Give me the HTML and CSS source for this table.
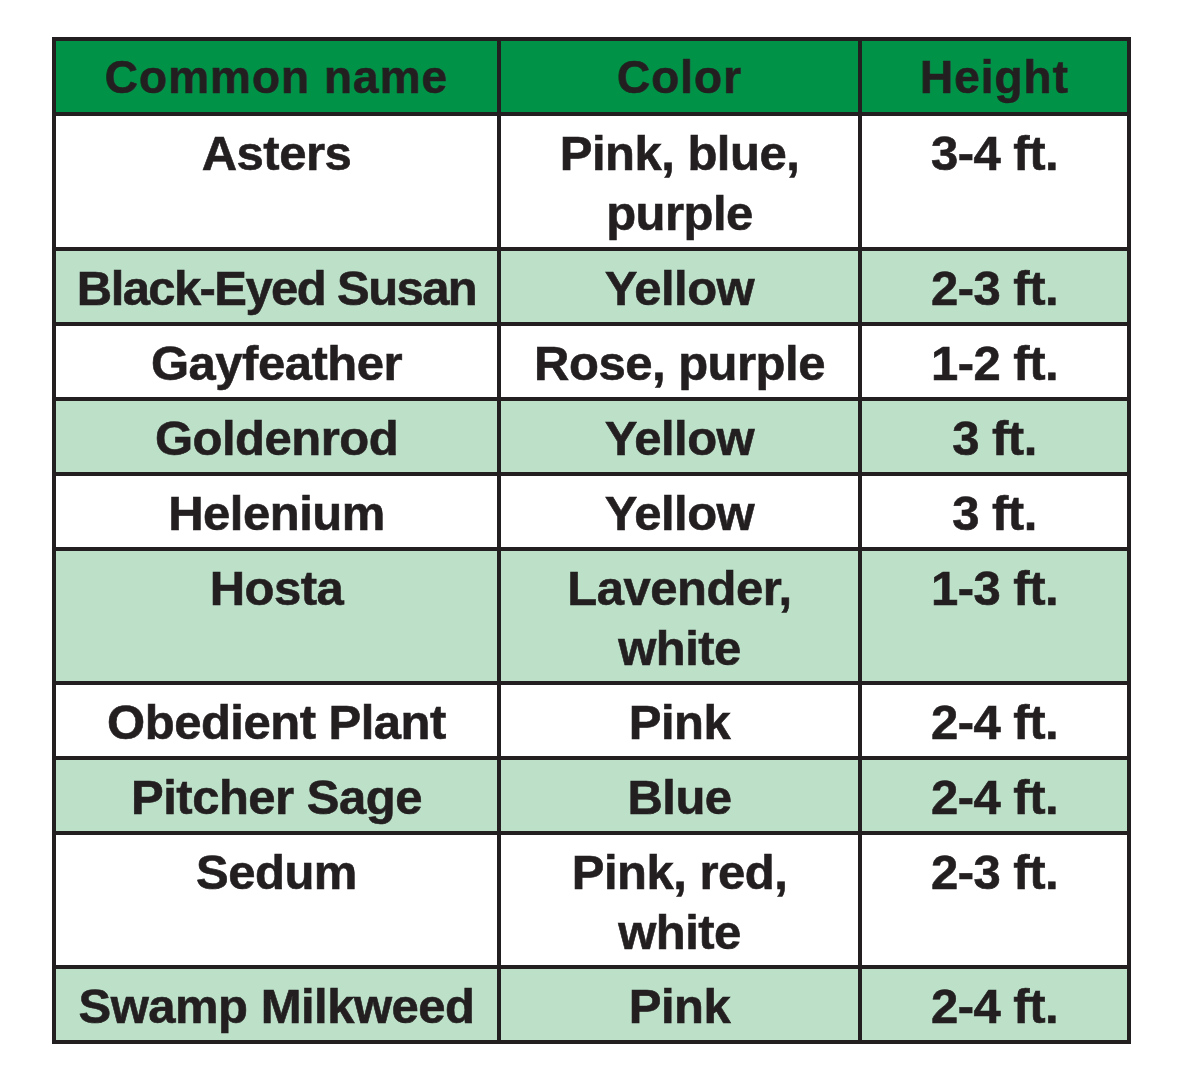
FILE: index.html
```html
<!DOCTYPE html>
<html>
<head>
<meta charset="utf-8">
<link rel="stylesheet" href="styles.css">
</head>
<body>
<div class="page">
<table class="plants">
  <thead>
    <tr class="head"><th class="c1">Common name</th><th class="c2">Color</th><th class="c3">Height</th></tr>
  </thead>
  <tbody>
    <tr class="tall"><td>Asters</td><td>Pink, blue,<br>purple</td><td>3-4 ft.</td></tr>
    <tr class="alt"><td class="tight">Black-Eyed Susan</td><td>Yellow</td><td>2-3 ft.</td></tr>
    <tr><td>Gayfeather</td><td>Rose, purple</td><td>1-2 ft.</td></tr>
    <tr class="alt"><td>Goldenrod</td><td>Yellow</td><td>3 ft.</td></tr>
    <tr><td>Helenium</td><td>Yellow</td><td>3 ft.</td></tr>
    <tr class="alt tall"><td>Hosta</td><td>Lavender,<br>white</td><td>1-3 ft.</td></tr>
    <tr><td>Obedient Plant</td><td>Pink</td><td>2-4 ft.</td></tr>
    <tr class="alt"><td>Pitcher Sage</td><td>Blue</td><td>2-4 ft.</td></tr>
    <tr class="tall"><td>Sedum</td><td>Pink, red,<br>white</td><td>2-3 ft.</td></tr>
    <tr class="alt"><td>Swamp Milkweed</td><td>Pink</td><td>2-4 ft.</td></tr>
  </tbody>
</table>
</div>
</body>
</html>
```
FILE: styles.css
```css
html, body {
  margin: 0;
  padding: 0;
  background: #ffffff;
}
.page {
  padding: 37px 0 0 52px;
}
.plants {
  border-collapse: separate;
  border-spacing: 4px;
  background: #231f20;
  font-family: "Liberation Sans", Arial, sans-serif;
  font-weight: bold;
  color: #231f20;
  -webkit-text-stroke: 0.6px #231f20;
}
.plants th,
.plants td {
  padding: 0;
  text-align: center;
}
.plants th {
  height: 71px;
  background: #009348;
  font-size: 46px;
  letter-spacing: 1px;
  vertical-align: middle;
  line-height: 50px;
}
.c1 { width: 441px; }
.c2 { width: 357px; }
.c3 { width: 265px; }
.plants td {
  background: #ffffff;
  font-size: 49px;
  letter-spacing: -0.5px;
  line-height: 60px;
  height: 64px;
  padding-top: 7px;
  vertical-align: top;
}
.plants td.tight {
  letter-spacing: -1.6px;
}
.plants tr.tall td {
  height: 123px;
}
.plants tr.tall:first-child td {
  height: 124px;
}
.plants tr.alt td {
  background: #bde0c9;
}
```
